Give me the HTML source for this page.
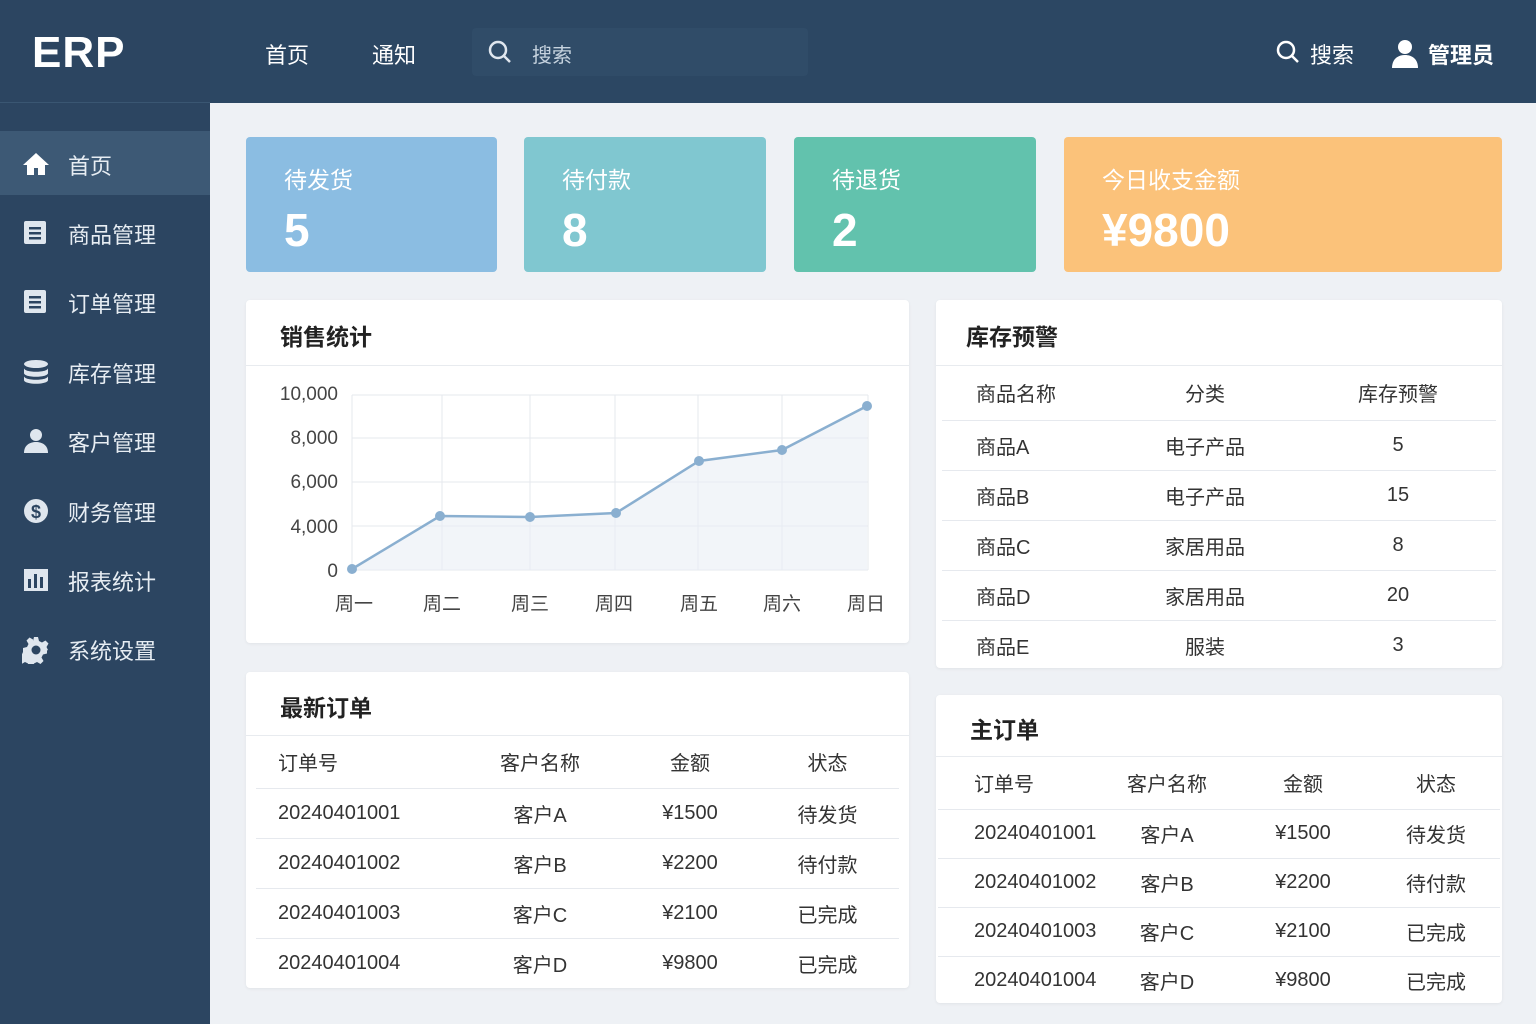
<!DOCTYPE html>
<html><head><meta charset="utf-8"><style>
*{margin:0;padding:0;box-sizing:border-box}
body{width:1536px;height:1024px;overflow:hidden;background:#eef1f5;font-family:"Liberation Sans","Noto Sans CJK SC",sans-serif;position:relative;color:#333}
.side{position:absolute;left:0;top:0;width:210px;height:1024px;background:#2c4561}
.logo{height:103px;background:#2c4561;border-bottom:1px solid #3a5672;color:#fff;font-size:44px;font-weight:bold;padding:28px 0 0 32px;letter-spacing:1px}
.top{position:absolute;left:210px;top:0;width:1326px;height:103px;background:#2c4763}
.nav{position:absolute;top:38px;color:#fff;font-size:22px}
.search{position:absolute;top:28px;width:336px;height:48px;background:#304c68;border-radius:4px;color:#c5d2de;font-size:20px;padding:11px 0 0 60px}
.mi{position:absolute;left:0;width:210px;height:64px;color:#e7edf3;font-size:22px;padding:18px 0 0 68px}
.mi.act{background:#3d5975}
.mi svg{position:absolute;left:22px;top:20px}
.card{position:absolute;top:137px;height:135px;border-radius:4px;color:#fff;padding:24px 0 0 38px}
.card .t{font-size:23px}
.card .v{font-size:46px;font-weight:bold;margin-top:8px}
.panel{position:absolute;background:#fff;border-radius:4px;box-shadow:0 1px 3px rgba(0,0,0,.06)}
.ph{height:66px;border-bottom:1px solid #e8ebef;font-size:23px;font-weight:bold;padding:18px 0 0 34px;color:#222}
table{border-collapse:collapse;width:100%;font-size:20px;table-layout:fixed}
td,th{text-align:center;font-weight:normal;color:#333}
tr{border-bottom:1px solid #e6e9ee}
tr:last-child{border-bottom:none}
</style></head><body>
<div class="side">
<div class="logo">ERP</div>
<div class="mi act" style="top:131px"><svg width="28" height="26" viewBox="0 0 28 26"><path d="M14 2L1 14h4v10h7v-7h4v7h7V14h4z" fill="#fff"/></svg>首页</div>
<div class="mi" style="top:200px"><svg width="26" height="26"><rect x="2" y="1" width="22" height="23" rx="2" fill="#dfe6ee"/><rect x="7" y="7" width="12" height="2.5" fill="#2c4561"/><rect x="7" y="12" width="12" height="2.5" fill="#2c4561"/><rect x="7" y="17" width="12" height="2.5" fill="#2c4561"/></svg>商品管理</div>
<div class="mi" style="top:269px"><svg width="26" height="26"><rect x="2" y="1" width="22" height="23" rx="2" fill="#dfe6ee"/><rect x="7" y="7" width="12" height="2.5" fill="#2c4561"/><rect x="7" y="12" width="12" height="2.5" fill="#2c4561"/><rect x="7" y="17" width="12" height="2.5" fill="#2c4561"/></svg>订单管理</div>
<div class="mi" style="top:339px"><svg width="28" height="26"><ellipse cx="14" cy="5" rx="12" ry="4" fill="#dfe6ee"/><path d="M2 9c0 5 24 5 24 0v5c0 5-24 5-24 0zM2 17c0 5 24 5 24 0v4c0 5-24 5-24 0z" fill="#dfe6ee"/></svg>库存管理</div>
<div class="mi" style="top:408px"><svg width="28" height="26"><circle cx="14" cy="7" r="6" fill="#dfe6ee"/><path d="M2 25c0-8 6-11 12-11s12 3 12 11z" fill="#dfe6ee"/></svg>客户管理</div>
<div class="mi" style="top:478px"><svg width="28" height="28"><circle cx="14" cy="13" r="12" fill="#dfe6ee"/><text x="14" y="20" font-size="18" font-weight="bold" text-anchor="middle" fill="#2c4561" font-family="Liberation Sans">$</text></svg>财务管理</div>
<div class="mi" style="top:547px"><svg width="28" height="26"><rect x="2" y="2" width="24" height="22" fill="#dfe6ee"/><rect x="6" y="12" width="3" height="9" fill="#2c4561"/><rect x="12" y="7" width="3" height="14" fill="#2c4561"/><rect x="18" y="10" width="3" height="11" fill="#2c4561"/></svg>报表统计</div>
<div class="mi" style="top:616px"><svg width="28" height="28" viewBox="0 0 28 28"><path d="M12 1h4l1 4 3 1.5 3.5-2 3 3-2 3.5L26 14l-1 .5 0 3-4 1-1.5 3 2 3.5-3 3-3.5-2-3 1.5-1 4h-4l-1-4-3-1.5-3.5 2-3-3 2-3.5L1 16v-4l4-1 1.5-3-2-3.5 3-3 3.5 2L11 5z" fill="#dfe6ee"/><circle cx="14" cy="14" r="4.5" fill="#2c4561"/></svg>系统设置</div>
</div>
<div class="top">
<div class="nav" style="left:55px">首页</div>
<div class="nav" style="left:162px">通知</div>
<div class="search" style="left:262px"><svg style="position:absolute;left:16px;top:12px" width="24" height="24"><circle cx="10" cy="10" r="8" stroke="#dfe6ee" stroke-width="2.5" fill="none"/><path d="M16 16l6 6" stroke="#dfe6ee" stroke-width="2.5"/></svg>搜索</div>
<svg style="position:absolute;left:1066px;top:40px" width="26" height="26"><circle cx="10" cy="10" r="8" stroke="#fff" stroke-width="2.5" fill="none"/><path d="M16 16l6 6" stroke="#fff" stroke-width="2.5"/></svg>
<div class="nav" style="left:1100px">搜索</div>
<svg style="position:absolute;left:1180px;top:38px" width="30" height="30"><circle cx="15" cy="9" r="7" fill="#fff"/><path d="M2 30c0-9 6-13 13-13s13 4 13 13z" fill="#fff"/></svg>
<div class="nav" style="left:1218px;font-weight:bold">管理员</div>
</div>

<div class="card" style="left:246px;width:251px;background:#8bbde2"><div class="t">待发货</div><div class="v">5</div></div>
<div class="card" style="left:524px;width:242px;background:#80c7d0"><div class="t">待付款</div><div class="v">8</div></div>
<div class="card" style="left:794px;width:242px;background:#62c2ad"><div class="t">待退货</div><div class="v">2</div></div>
<div class="card" style="left:1064px;width:438px;background:#fbc27a"><div class="t">今日收支金额</div><div class="v">¥9800</div></div>

<div class="panel" style="left:246px;top:300px;width:663px;height:343px">
<div class="ph">销售统计</div>
<svg style="position:absolute;left:0;top:66px" width="663" height="277" font-family="Liberation Sans,Noto Sans CJK SC,sans-serif" font-size="19" fill="#444">
<g stroke="#e6e9ee" stroke-width="1">
<line x1="106" y1="29" x2="622" y2="29"/><line x1="106" y1="72" x2="622" y2="72"/><line x1="106" y1="116" x2="622" y2="116"/><line x1="106" y1="160" x2="622" y2="160"/><line x1="106" y1="204" x2="622" y2="204"/>
<line x1="106" y1="29" x2="106" y2="204"/><line x1="196" y1="29" x2="196" y2="204"/><line x1="284" y1="29" x2="284" y2="204"/><line x1="369" y1="29" x2="369" y2="204"/><line x1="452" y1="29" x2="452" y2="204"/><line x1="536" y1="29" x2="536" y2="204"/><line x1="622" y1="29" x2="622" y2="204"/>
</g>
<g transform="translate(-246,-366)">
<path d="M352 569L440 516 530 517 616 513 699 461 782 450 867 406V570H352z" fill="#e9eff5" opacity=".6"/>
<polyline points="352,569 440,516 530,517 616,513 699,461 782,450 867,406" fill="none" stroke="#8aafd0" stroke-width="2.5"/>
<g fill="#8aafd0"><circle cx="352" cy="569" r="5"/><circle cx="440" cy="516" r="5"/><circle cx="530" cy="517" r="5"/><circle cx="616" cy="513" r="5"/><circle cx="699" cy="461" r="5"/><circle cx="782" cy="450" r="5"/><circle cx="867" cy="406" r="5"/></g>
</g>
<g text-anchor="end"><text x="92" y="34">10,000</text><text x="92" y="78">8,000</text><text x="92" y="122">6,000</text><text x="92" y="167">4,000</text><text x="92" y="211">0</text></g>
<g text-anchor="middle"><text x="108" y="244">周一</text><text x="196" y="244">周二</text><text x="284" y="244">周三</text><text x="368" y="244">周四</text><text x="453" y="244">周五</text><text x="536" y="244">周六</text><text x="620" y="244">周日</text></g>
</svg>
</div>

<div class="panel" style="left:936px;top:300px;width:566px;height:368px">
<div class="ph" style="padding-left:30px">库存预警</div>
<table style="margin:0 6px;width:554px">
<colgroup><col style="width:168px"><col style="width:190px"><col style="width:196px"></colgroup>
<tr style="height:54px"><th style="text-align:left;padding-left:34px">商品名称</th><th>分类</th><th>库存预警</th></tr>
<tr style="height:50px"><td style="text-align:left;padding-left:34px">商品A</td><td>电子产品</td><td>5</td></tr>
<tr style="height:50px"><td style="text-align:left;padding-left:34px">商品B</td><td>电子产品</td><td>15</td></tr>
<tr style="height:50px"><td style="text-align:left;padding-left:34px">商品C</td><td>家居用品</td><td>8</td></tr>
<tr style="height:50px"><td style="text-align:left;padding-left:34px">商品D</td><td>家居用品</td><td>20</td></tr>
<tr style="height:50px"><td style="text-align:left;padding-left:34px">商品E</td><td>服装</td><td>3</td></tr>
</table></div>

<div class="panel" style="left:246px;top:672px;width:663px;height:316px">
<div class="ph" style="height:64px;padding-top:17px">最新订单</div>
<table style="margin:0 10px;width:643px">
<colgroup><col style="width:200px"><col style="width:168px"><col style="width:132px"><col style="width:143px"></colgroup>
<tr style="height:52px"><th style="text-align:left;padding-left:22px">订单号</th><th>客户名称</th><th>金额</th><th>状态</th></tr>
<tr style="height:50px"><td style="text-align:left;padding-left:22px">20240401001</td><td>客户A</td><td>¥1500</td><td>待发货</td></tr>
<tr style="height:50px"><td style="text-align:left;padding-left:22px">20240401002</td><td>客户B</td><td>¥2200</td><td>待付款</td></tr>
<tr style="height:50px"><td style="text-align:left;padding-left:22px">20240401003</td><td>客户C</td><td>¥2100</td><td>已完成</td></tr>
<tr style="height:50px"><td style="text-align:left;padding-left:22px">20240401004</td><td>客户D</td><td>¥9800</td><td>已完成</td></tr>
</table></div>

<div class="panel" style="left:936px;top:695px;width:566px;height:308px">
<div class="ph" style="height:62px;padding-top:16px">主订单</div>
<table style="margin:0 2px;width:562px">
<colgroup><col style="width:162px"><col style="width:134px"><col style="width:138px"><col style="width:128px"></colgroup>
<tr style="height:52px"><th style="text-align:left;padding-left:36px">订单号</th><th>客户名称</th><th>金额</th><th>状态</th></tr>
<tr style="height:49px"><td style="text-align:left;padding-left:36px">20240401001</td><td>客户A</td><td>¥1500</td><td>待发货</td></tr>
<tr style="height:49px"><td style="text-align:left;padding-left:36px">20240401002</td><td>客户B</td><td>¥2200</td><td>待付款</td></tr>
<tr style="height:49px"><td style="text-align:left;padding-left:36px">20240401003</td><td>客户C</td><td>¥2100</td><td>已完成</td></tr>
<tr style="height:49px"><td style="text-align:left;padding-left:36px">20240401004</td><td>客户D</td><td>¥9800</td><td>已完成</td></tr>
</table></div>
</body></html>
